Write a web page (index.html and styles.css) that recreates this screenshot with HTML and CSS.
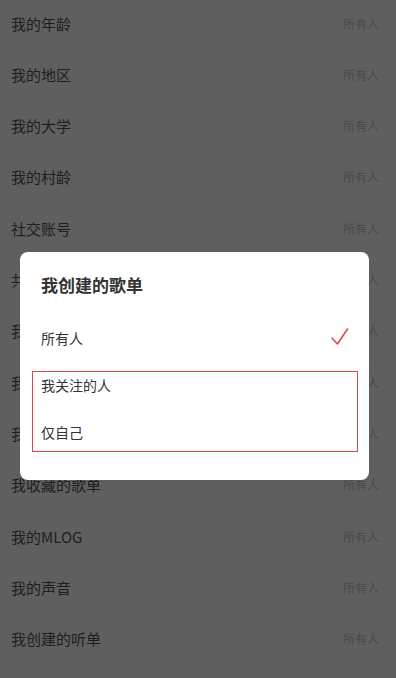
FILE: index.html
```html
<!DOCTYPE html>
<html lang="zh-CN">
<head>
<meta charset="utf-8">
<title>隐私设置</title>
<link rel="stylesheet" href="styles.css">
</head>
<body>
<ul class="list">
  <li class="row"><span class="label">我的年龄</span><span class="value">所有人</span></li>
  <li class="row"><span class="label">我的地区</span><span class="value">所有人</span></li>
  <li class="row"><span class="label">我的大学</span><span class="value">所有人</span></li>
  <li class="row"><span class="label">我的村龄</span><span class="value">所有人</span></li>
  <li class="row"><span class="label">社交账号</span><span class="value">所有人</span></li>
  <li class="row"><span class="label">共同好友</span><span class="value">所有人</span></li>
  <li class="row"><span class="label">我的动态</span><span class="value">所有人</span></li>
  <li class="row"><span class="label">我的听歌排行</span><span class="value">所有人</span></li>
  <li class="row"><span class="label">我创建的歌单</span><span class="value">所有人</span></li>
  <li class="row"><span class="label">我收藏的歌单</span><span class="value">所有人</span></li>
  <li class="row"><span class="label">我的MLOG</span><span class="value">所有人</span></li>
  <li class="row"><span class="label">我的声音</span><span class="value">所有人</span></li>
  <li class="row"><span class="label">我创建的听单</span><span class="value">所有人</span></li>
</ul>
<div class="overlay">
  <div class="dialog">
    <div class="title">我创建的歌单</div>
    <div class="option selected">
      <span>所有人</span>
      <svg class="check" width="20" height="20" viewBox="0 0 20 20"><path d="M3 10.3 L8.5 16 L18.5 1" fill="none" stroke="#e0474c" stroke-width="1.6" stroke-linecap="round" stroke-linejoin="round"/></svg>
    </div>
    <div class="marked">
      <div class="option small">我关注的人</div>
      <div class="option small">仅自己</div>
    </div>
  </div>
</div>
</body>
</html>
```
FILE: styles.css
```css
html, body {
  margin: 0;
  padding: 0;
  height: 100%;
  overflow: hidden;
  background: #5f5f5f;
  font-family: "Noto Sans CJK SC", "Noto Sans", sans-serif;
}
.list {
  list-style: none;
  margin: -2.67px 0 0 0;
  padding: 0;
}
.row {
  height: 51.33px;
  display: flex;
  align-items: center;
  justify-content: space-between;
  padding: 0 17px 0 11px;
}
.label {
  font-size: 15px;
  color: #1e1e1e;
}
.value {
  font-size: 12px;
  color: #4a4a4a;
}
.overlay {
  position: fixed;
  inset: 0;
  padding: 252px 0 0 20px;
}
.dialog {
  width: 349px;
  background: #ffffff;
  border-radius: 8px;
  padding: 24px 0 28px 0;
  box-sizing: border-box;
}
.title {
  padding-left: 21px;
  font-size: 17px;
  line-height: 18px;
  font-weight: bold;
  color: #333333;
}
.option {
  display: flex;
  align-items: center;
  justify-content: space-between;
  font-size: 14px;
  color: #333333;
}
.selected {
  margin-top: 20.5px;
  height: 47px;
  padding: 0 20px 0 21px;
}
.check {
  display: block;
}
.marked {
  margin: 9.5px 11px 0 12px;
  border: 1px solid #d9484c;
  padding: 0 0 6px 8px;
  display: flex;
  flex-direction: column;
  gap: 21px;
}
.small {
  height: 26px;
}
```
